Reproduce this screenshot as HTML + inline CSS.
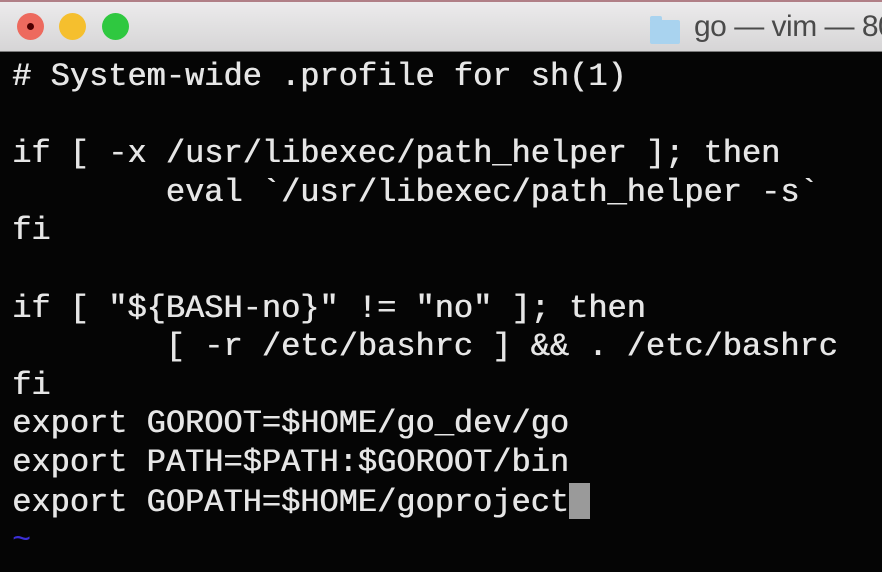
<!DOCTYPE html>
<html><head><meta charset="utf-8"><style>
html,body{margin:0;padding:0;width:882px;height:572px;overflow:hidden;background:#050505;}
.bar{position:absolute;left:0;top:0;width:882px;height:52px;background:linear-gradient(#ecebec,#d6d5d6);border-top:2px solid #b07f86;box-sizing:border-box;border-bottom:1px solid #7a7a7a;}
.c{position:absolute;top:11px;width:27px;height:27px;border-radius:50%;}
.title{position:absolute;left:694px;top:8px;font:30px "Liberation Sans",sans-serif;color:#4a4a4a;white-space:nowrap;letter-spacing:-0.5px}
.folder{position:absolute;left:650px;top:18px;width:30px;height:24px;background:#a9d3ef;border-radius:2px}
.folder:before{content:"";position:absolute;left:0;top:-4px;width:12px;height:5px;background:#a9d3ef;border-radius:2px 2px 0 0}
pre{position:absolute;left:12px;top:58px;margin:0;font:32px/38.6px "Liberation Mono",monospace;color:#e6e6e6;text-shadow:0.6px 0 0 #e6e6e6;}
.cur{display:inline-block;width:21px;height:36px;background:#9a9a9a;vertical-align:-8px}
.t{color:#3b2fd6;text-shadow:none}
</style></head><body>
<div class="bar">
<div class="c" style="left:17px;background:#ed6a5e"><div style="position:absolute;left:10px;top:10px;width:7px;height:7px;border-radius:50%;background:#4d0000"></div></div>
<div class="c" style="left:59px;background:#f5bf2e"></div>
<div class="c" style="left:102px;background:#2fc840"></div>
<div class="folder"></div>
<div class="title">go — vim — 80</div>
</div>
<pre># System-wide .profile for sh(1)

if [ -x /usr/libexec/path_helper ]; then
        eval `/usr/libexec/path_helper -s`
fi

if [ "${BASH-no}" != "no" ]; then
        [ -r /etc/bashrc ] &amp;&amp; . /etc/bashrc
fi
export GOROOT=$HOME/go_dev/go
export PATH=$PATH:$GOROOT/bin
export GOPATH=$HOME/goproject<span class="cur"></span>
<span class="t">~</span></pre>
</body></html>
